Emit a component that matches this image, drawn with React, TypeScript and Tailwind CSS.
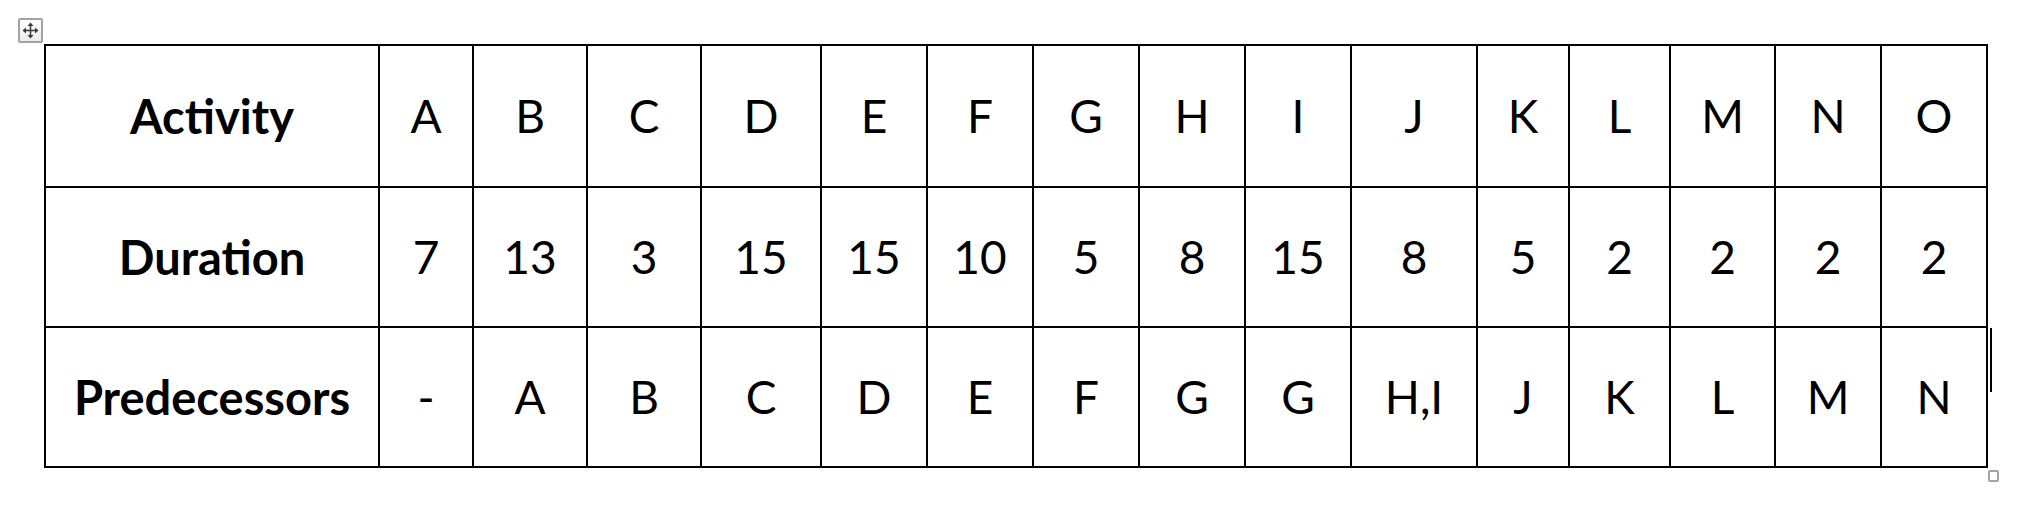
import React from 'react';

const rows: { label: string; cells: string[] }[] = [
    { label: 'Activity', cells: ['A', 'B', 'C', 'D', 'E', 'F', 'G', 'H', 'I', 'J', 'K', 'L', 'M', 'N', 'O'] },
    { label: 'Duration', cells: ['7', '13', '3', '15', '15', '10', '5', '8', '15', '8', '5', '2', '2', '2', '2'] },
    { label: 'Predecessors', cells: ['-', 'A', 'B', 'C', 'D', 'E', 'F', 'G', 'G', 'H,I', 'J', 'K', 'L', 'M', 'N'] },
];

// Word table move handle
function MoveHandle() {
    return (
        <div className="absolute left-[18px] top-[18px] w-[25px] h-[25px] rounded-[2px] border-2 border-[#a3a3a3] bg-gradient-to-b from-white to-[#ececec] flex items-center justify-center">
            <svg width="17" height="17" viewBox="0 0 17 17" fill="#3a3a3a">
                <rect x="7.75" y="3" width="1.5" height="11" />
                <rect x="3" y="7.75" width="11" height="1.5" />
                <path d="M8.5 0.5 L11.5 4 L5.5 4 Z" />
                <path d="M8.5 16.5 L11.5 13 L5.5 13 Z" />
                <path d="M0.5 8.5 L4 5.5 L4 11.5 Z" />
                <path d="M16.5 8.5 L13 5.5 L13 11.5 Z" />
            </svg>
        </div>
    );
}

export default function App() {
    return (
        <div className="relative w-[2040px] h-[506px] bg-white pl-[44px] pt-[44px]" style={{ fontFamily: 'Lato, "Liberation Sans", sans-serif' }}>
            <MoveHandle />

            <div className="inline-grid bg-black p-[2px] gap-[2px] grid-cols-[332px_92px_112px_112px_118px_104px_104px_104px_104px_104px_124px_90px_99px_103px_104px_104px] grid-rows-[140px_138px_138px]">
                {rows.map((row) => (
                    <React.Fragment key={row.label}>
                        <div className="bg-white flex items-center justify-center text-[47px] font-bold text-black leading-none">
                            {row.label}
                        </div>
                        {row.cells.map((c, i) => (
                            <div key={i} className="bg-white flex items-center justify-center text-[46px] text-black leading-none">
                                {c}
                            </div>
                        ))}
                    </React.Fragment>
                ))}
            </div>

            {/* resize handle + cursor bar */}
            <div className="absolute left-[1990px] top-[328px] w-[2px] h-[64px] bg-black" />
            <div className="absolute left-[1988px] top-[470px] w-[11px] h-[12px] rounded-[2px] border-2 border-[#a3a3a3] bg-white" />
        </div>
    );
}
